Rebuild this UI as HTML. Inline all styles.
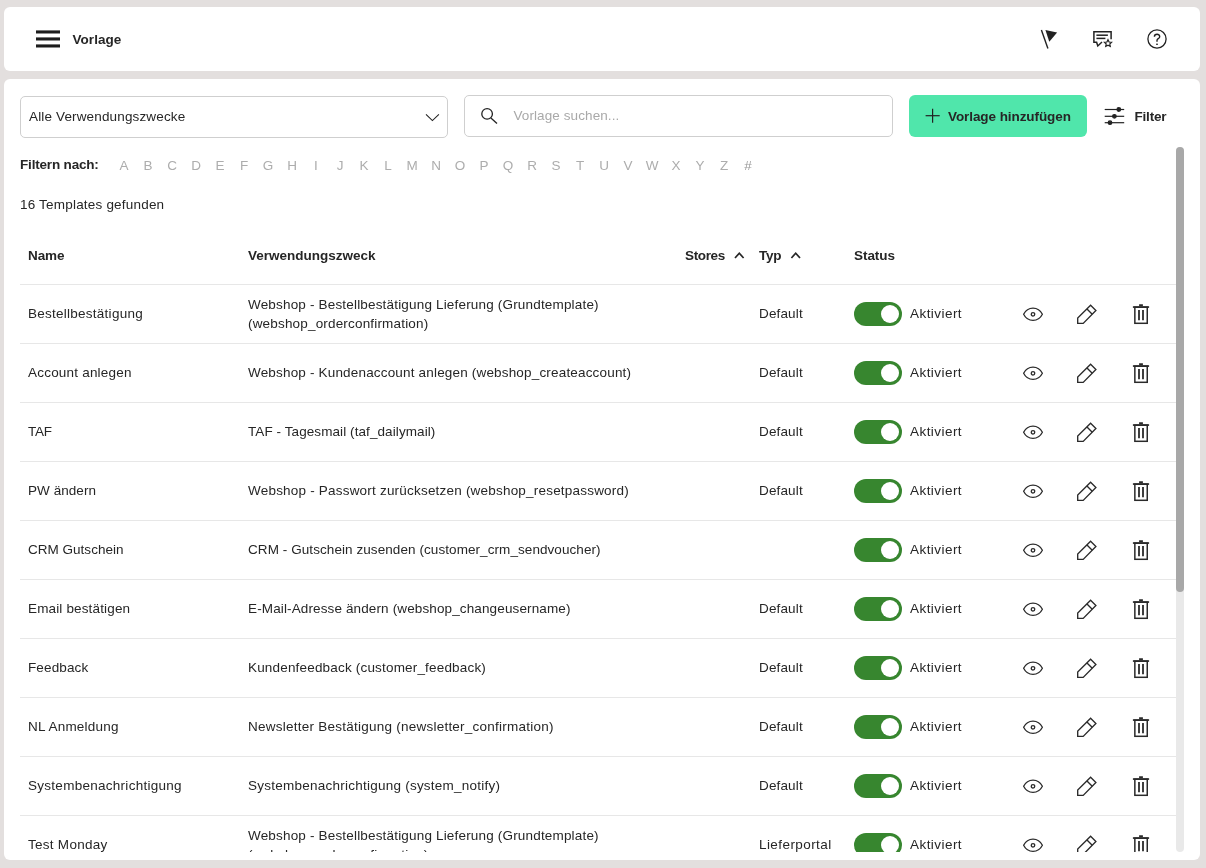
<!DOCTYPE html>
<html lang="de">
<head>
<meta charset="utf-8">
<title>Vorlage</title>
<style>
*{box-sizing:border-box;margin:0;padding:0}
html,body{width:1206px;height:868px;overflow:hidden;background:#e3dfde}
body{font-family:"Liberation Sans",sans-serif;font-size:13.5px;letter-spacing:.15px;color:#262626;position:relative}
#wrap{position:absolute;left:0;top:0;width:1206px;height:868px;will-change:transform}
.panel{position:absolute;background:#fff;border-radius:6px}
#top{left:4px;top:7px;width:1196px;height:64px}
#main{left:4px;top:79px;width:1196px;height:781px}
.abs{position:absolute;white-space:nowrap}
.b{font-weight:700;font-size:13.5px}
svg{position:absolute;overflow:visible}
.ham{position:absolute;left:36px;width:24px;height:3px;background:#262626}
.box{position:absolute;border:1px solid #cfcfcf;border-radius:5px;background:#fff}
.btn{position:absolute;left:909px;top:95px;width:178px;height:42px;border-radius:6px;background:#50e6ab}
.alpha{position:absolute;top:158px;height:16px;line-height:16px;width:24px;text-align:center;color:#adadad;letter-spacing:0}
#scroll{position:absolute;left:20px;top:147px;width:1156px;height:705px;overflow:hidden}
.row{position:absolute;left:0;width:1156px;height:59px;border-top:1px solid #e7e7e7}
.row .t{position:absolute;white-space:nowrap;line-height:19px}
.tg{position:absolute;left:834px;top:17px;width:48px;height:24px;border-radius:12px;background:#37862f}
.tg i{position:absolute;left:27px;top:3px;width:18px;height:18px;border-radius:9px;background:#fff}
.track{position:absolute;left:1176px;top:147px;width:8px;height:705px;border-radius:4px;background:#e9e9e9}
.thumb{position:absolute;left:1176px;top:147px;width:8px;height:445px;border-radius:4px;background:#a8a8a8}
</style>
</head>
<body>
<div id="wrap">
<div class="panel" id="top"></div>
<div class="panel" id="main"></div>

<!-- header -->
<svg style="left:32px;top:24px" width="32" height="30" viewBox="32 24 32 30" stroke="#1c1c1c" stroke-width="3.1">
  <line x1="36" y1="31.95" x2="60" y2="31.95"/>
  <line x1="36" y1="38.95" x2="60" y2="38.95"/>
  <line x1="36" y1="45.95" x2="60" y2="45.95"/>
</svg>
<div class="abs b" style="left:72.5px;top:32px;line-height:16px;letter-spacing:.05px">Vorlage</div>

<svg style="left:1029px;top:19px" width="40" height="40" viewBox="1029 19 40 40">
  <line x1="1041.4" y1="30.1" x2="1047.9" y2="48.4" stroke="#222" stroke-width="1.4"/>
  <polygon points="1045.4,30.1 1057.1,32.5 1049.3,41.8" fill="#222"/>
</svg>
<svg style="left:1083px;top:19px" width="40" height="40" viewBox="1083 19 40 40" fill="none" stroke="#222" stroke-width="1.5">
  <path d="M1111.1 39.3 V31.7 H1093.9 V42.2 H1096.6 L1097.8 46 L1102 42"/>
  <line x1="1096.4" y1="35.2" x2="1107.9" y2="35.2"/>
  <line x1="1096.4" y1="38.4" x2="1105.4" y2="38.4"/>
  <path stroke-width="1.2" d="M1108 39.7 L1109.1 42 L1111.6 42.3 L1109.8 44 L1110.3 46.5 L1108 45.3 L1105.7 46.5 L1106.2 44 L1104.4 42.3 L1106.9 42 Z"/>
</svg>
<svg style="left:1137px;top:19px" width="40" height="40" viewBox="1137 19 40 40" fill="none" stroke="#222" stroke-width="1.3">
  <circle cx="1157" cy="39" r="9.1"/>
  <path stroke-width="1.4" d="M1154.4 36.8 C1154.4 33.4 1159.7 33.4 1159.7 36.7 C1159.7 38.8 1157 38.5 1157 40.4 V41.7"/>
  <rect x="1156.2" y="43.6" width="1.6" height="1.4" fill="#222" stroke="none"/>
</svg>

<!-- toolbar -->
<div class="box" style="left:20px;top:96px;width:428px;height:42px"></div>
<div class="abs" style="left:29px;top:108px;line-height:18px">Alle Verwendungszwecke</div>
<svg style="left:420px;top:106px" width="24" height="24" viewBox="420 106 24 24" fill="none" stroke="#222" stroke-width="1.1">
  <path d="M426 114.4 L432.4 120.6 L438.9 114.4"/>
</svg>
<div class="box" style="left:464px;top:95px;width:429px;height:42px"></div>
<svg style="left:476px;top:104px" width="24" height="24" viewBox="476 104 24 24" fill="none" stroke="#222" stroke-width="1.3">
  <circle cx="487.1" cy="113.9" r="5.3"/>
  <line x1="490.9" y1="117.9" x2="497" y2="123.4"/>
</svg>
<div class="abs" style="left:513.5px;top:107px;line-height:18px;color:#a9a9a9;letter-spacing:.09px">Vorlage suchen...</div>
<div class="btn"></div>
<svg style="left:924px;top:107px" width="18" height="18" viewBox="924 107 18 18" stroke="#222" stroke-width="1.2">
  <line x1="925.6" y1="115.7" x2="939.7" y2="115.7"/>
  <line x1="932.6" y1="108.7" x2="932.6" y2="122.7"/>
</svg>
<div class="abs b" style="left:948px;top:108px;line-height:18px;letter-spacing:-.08px">Vorlage hinzufügen</div>
<svg style="left:1094px;top:96px" width="40" height="40" viewBox="1094 96 40 40" stroke="#222" stroke-width="1.2" fill="#222">
  <line x1="1104.7" y1="109.5" x2="1124.2" y2="109.5"/>
  <line x1="1104.7" y1="116.3" x2="1124.2" y2="116.3"/>
  <line x1="1104.7" y1="122.7" x2="1124.2" y2="122.7"/>
  <circle cx="1118.8" cy="109.5" r="1.8"/>
  <circle cx="1114.4" cy="116.3" r="1.8"/>
  <circle cx="1110" cy="122.7" r="1.8"/>
</svg>
<div class="abs b" style="left:1134.5px;top:108px;line-height:18px;letter-spacing:-.2px">Filter</div>

<!-- alphabet filter -->
<div class="abs b" style="left:20px;top:156px;line-height:18px;letter-spacing:-.18px">Filtern nach:</div>
<div id="alpha"><div class="alpha" style="left:112px">A</div><div class="alpha" style="left:136px">B</div><div class="alpha" style="left:160px">C</div><div class="alpha" style="left:184px">D</div><div class="alpha" style="left:208px">E</div><div class="alpha" style="left:232px">F</div><div class="alpha" style="left:256px">G</div><div class="alpha" style="left:280px">H</div><div class="alpha" style="left:304px">I</div><div class="alpha" style="left:328px">J</div><div class="alpha" style="left:352px">K</div><div class="alpha" style="left:376px">L</div><div class="alpha" style="left:400px">M</div><div class="alpha" style="left:424px">N</div><div class="alpha" style="left:448px">O</div><div class="alpha" style="left:472px">P</div><div class="alpha" style="left:496px">Q</div><div class="alpha" style="left:520px">R</div><div class="alpha" style="left:544px">S</div><div class="alpha" style="left:568px">T</div><div class="alpha" style="left:592px">U</div><div class="alpha" style="left:616px">V</div><div class="alpha" style="left:640px">W</div><div class="alpha" style="left:664px">X</div><div class="alpha" style="left:688px">Y</div><div class="alpha" style="left:712px">Z</div><div class="alpha" style="left:736px;color:#9a9a9a">#</div></div>
<div class="abs" style="left:20px;top:196px;line-height:18px;letter-spacing:.2px">16 Templates gefunden</div>

<!-- table -->
<div id="scroll">
  <div id="rows"><div class="abs b" style="left:8px;top:100px;line-height:18px;letter-spacing:-0.1px">Name</div>
<div class="abs b" style="left:228px;top:100px;line-height:18px;letter-spacing:0px">Verwendungszweck</div>
<div class="abs b" style="left:665px;top:100px;line-height:18px;letter-spacing:-0.37px">Stores</div>
<svg style="left:712px;top:100px" width="16" height="16" viewBox="732 247 16 16" fill="none" stroke="#262626" stroke-width="1.7"><path d="M735 258 L739.3 253.2 L743.6 258"/></svg>
<div class="abs b" style="left:739px;top:100px;line-height:18px;letter-spacing:-0.2px">Typ</div>
<svg style="left:768px;top:100px" width="16" height="16" viewBox="788 247 16 16" fill="none" stroke="#262626" stroke-width="1.7"><path d="M791.4 258 L795.7 253.2 L800 258"/></svg>
<div class="abs b" style="left:834px;top:100px;line-height:18px;letter-spacing:-0.05px">Status</div>
<div class="row" style="top:137px">
<div class="t" style="left:8px;top:19px;letter-spacing:0.256px">Bestellbestätigung</div>
<div class="t" style="left:228px;top:10px;letter-spacing:0.177px">Webshop - Bestellbestätigung Lieferung (Grundtemplate)<br>(webshop_orderconfirmation)</div>
<div class="t" style="left:739px;top:19px;letter-spacing:0.15px">Default</div>
<div class="tg"><i></i></div>
<div class="t" style="left:890px;top:19px;letter-spacing:0.451px">Aktiviert</div>
<svg style="left:1001px;top:17px" width="24" height="24" viewBox="-12 -12 24 24" fill="none" stroke="#2a2a2a" stroke-width="1.3"><path stroke-linejoin="round" d="M-9.4 0.2 C-5.2 -8 5.2 -8 9.4 0.2 C5.2 8.4 -5.2 8.4 -9.4 0.2 Z"/><circle cx="0" cy="0.3" r="1.75"/></svg>
<svg style="left:1055px;top:17px" width="24" height="24" viewBox="1075 302 24 24" fill="none" stroke="#2a2a2a" stroke-width="1.35" stroke-linejoin="miter"><path d="M1090.6 305.3 L1095.9 310.6 L1083.2 323.4 H1077.7 V318.1 Z"/><line x1="1087" y1="309" x2="1092.2" y2="314.2"/></svg>
<svg style="left:1109px;top:17px" width="24" height="24" viewBox="1129 302 24 24" fill="none" stroke="#2a2a2a" stroke-width="1.5"><rect x="1134.85" y="307.2" width="12.4" height="16.1"/><line x1="1132.9" y1="307.05" x2="1149.1" y2="307.05" stroke-width="1.7"/><line x1="1139.1" y1="305.2" x2="1142.9" y2="305.2" stroke-width="1.9"/><line x1="1139" y1="310" x2="1139" y2="320.2" stroke-width="1.8"/><line x1="1143" y1="310" x2="1143" y2="320.2" stroke-width="1.8"/></svg>
</div>
<div class="row" style="top:196px">
<div class="t" style="left:8px;top:19px;letter-spacing:0.207px">Account anlegen</div>
<div class="t" style="left:228px;top:19px;letter-spacing:0.176px">Webshop - Kundenaccount anlegen (webshop_createaccount)</div>
<div class="t" style="left:739px;top:19px;letter-spacing:0.15px">Default</div>
<div class="tg"><i></i></div>
<div class="t" style="left:890px;top:19px;letter-spacing:0.451px">Aktiviert</div>
<svg style="left:1001px;top:17px" width="24" height="24" viewBox="-12 -12 24 24" fill="none" stroke="#2a2a2a" stroke-width="1.3"><path stroke-linejoin="round" d="M-9.4 0.2 C-5.2 -8 5.2 -8 9.4 0.2 C5.2 8.4 -5.2 8.4 -9.4 0.2 Z"/><circle cx="0" cy="0.3" r="1.75"/></svg>
<svg style="left:1055px;top:17px" width="24" height="24" viewBox="1075 302 24 24" fill="none" stroke="#2a2a2a" stroke-width="1.35" stroke-linejoin="miter"><path d="M1090.6 305.3 L1095.9 310.6 L1083.2 323.4 H1077.7 V318.1 Z"/><line x1="1087" y1="309" x2="1092.2" y2="314.2"/></svg>
<svg style="left:1109px;top:17px" width="24" height="24" viewBox="1129 302 24 24" fill="none" stroke="#2a2a2a" stroke-width="1.5"><rect x="1134.85" y="307.2" width="12.4" height="16.1"/><line x1="1132.9" y1="307.05" x2="1149.1" y2="307.05" stroke-width="1.7"/><line x1="1139.1" y1="305.2" x2="1142.9" y2="305.2" stroke-width="1.9"/><line x1="1139" y1="310" x2="1139" y2="320.2" stroke-width="1.8"/><line x1="1143" y1="310" x2="1143" y2="320.2" stroke-width="1.8"/></svg>
</div>
<div class="row" style="top:255px">
<div class="t" style="left:8px;top:19px;letter-spacing:-0.25px">TAF</div>
<div class="t" style="left:228px;top:19px;letter-spacing:0.083px">TAF - Tagesmail (taf_dailymail)</div>
<div class="t" style="left:739px;top:19px;letter-spacing:0.15px">Default</div>
<div class="tg"><i></i></div>
<div class="t" style="left:890px;top:19px;letter-spacing:0.451px">Aktiviert</div>
<svg style="left:1001px;top:17px" width="24" height="24" viewBox="-12 -12 24 24" fill="none" stroke="#2a2a2a" stroke-width="1.3"><path stroke-linejoin="round" d="M-9.4 0.2 C-5.2 -8 5.2 -8 9.4 0.2 C5.2 8.4 -5.2 8.4 -9.4 0.2 Z"/><circle cx="0" cy="0.3" r="1.75"/></svg>
<svg style="left:1055px;top:17px" width="24" height="24" viewBox="1075 302 24 24" fill="none" stroke="#2a2a2a" stroke-width="1.35" stroke-linejoin="miter"><path d="M1090.6 305.3 L1095.9 310.6 L1083.2 323.4 H1077.7 V318.1 Z"/><line x1="1087" y1="309" x2="1092.2" y2="314.2"/></svg>
<svg style="left:1109px;top:17px" width="24" height="24" viewBox="1129 302 24 24" fill="none" stroke="#2a2a2a" stroke-width="1.5"><rect x="1134.85" y="307.2" width="12.4" height="16.1"/><line x1="1132.9" y1="307.05" x2="1149.1" y2="307.05" stroke-width="1.7"/><line x1="1139.1" y1="305.2" x2="1142.9" y2="305.2" stroke-width="1.9"/><line x1="1139" y1="310" x2="1139" y2="320.2" stroke-width="1.8"/><line x1="1143" y1="310" x2="1143" y2="320.2" stroke-width="1.8"/></svg>
</div>
<div class="row" style="top:314px">
<div class="t" style="left:8px;top:19px;letter-spacing:0.05px">PW ändern</div>
<div class="t" style="left:228px;top:19px;letter-spacing:0.205px">Webshop - Passwort zurücksetzen (webshop_resetpassword)</div>
<div class="t" style="left:739px;top:19px;letter-spacing:0.15px">Default</div>
<div class="tg"><i></i></div>
<div class="t" style="left:890px;top:19px;letter-spacing:0.451px">Aktiviert</div>
<svg style="left:1001px;top:17px" width="24" height="24" viewBox="-12 -12 24 24" fill="none" stroke="#2a2a2a" stroke-width="1.3"><path stroke-linejoin="round" d="M-9.4 0.2 C-5.2 -8 5.2 -8 9.4 0.2 C5.2 8.4 -5.2 8.4 -9.4 0.2 Z"/><circle cx="0" cy="0.3" r="1.75"/></svg>
<svg style="left:1055px;top:17px" width="24" height="24" viewBox="1075 302 24 24" fill="none" stroke="#2a2a2a" stroke-width="1.35" stroke-linejoin="miter"><path d="M1090.6 305.3 L1095.9 310.6 L1083.2 323.4 H1077.7 V318.1 Z"/><line x1="1087" y1="309" x2="1092.2" y2="314.2"/></svg>
<svg style="left:1109px;top:17px" width="24" height="24" viewBox="1129 302 24 24" fill="none" stroke="#2a2a2a" stroke-width="1.5"><rect x="1134.85" y="307.2" width="12.4" height="16.1"/><line x1="1132.9" y1="307.05" x2="1149.1" y2="307.05" stroke-width="1.7"/><line x1="1139.1" y1="305.2" x2="1142.9" y2="305.2" stroke-width="1.9"/><line x1="1139" y1="310" x2="1139" y2="320.2" stroke-width="1.8"/><line x1="1143" y1="310" x2="1143" y2="320.2" stroke-width="1.8"/></svg>
</div>
<div class="row" style="top:373px">
<div class="t" style="left:8px;top:19px;letter-spacing:0.017px">CRM Gutschein</div>
<div class="t" style="left:228px;top:19px;letter-spacing:0.074px">CRM - Gutschein zusenden (customer_crm_sendvoucher)</div>
<div class="t" style="left:739px;top:19px;letter-spacing:0.15px"></div>
<div class="tg"><i></i></div>
<div class="t" style="left:890px;top:19px;letter-spacing:0.451px">Aktiviert</div>
<svg style="left:1001px;top:17px" width="24" height="24" viewBox="-12 -12 24 24" fill="none" stroke="#2a2a2a" stroke-width="1.3"><path stroke-linejoin="round" d="M-9.4 0.2 C-5.2 -8 5.2 -8 9.4 0.2 C5.2 8.4 -5.2 8.4 -9.4 0.2 Z"/><circle cx="0" cy="0.3" r="1.75"/></svg>
<svg style="left:1055px;top:17px" width="24" height="24" viewBox="1075 302 24 24" fill="none" stroke="#2a2a2a" stroke-width="1.35" stroke-linejoin="miter"><path d="M1090.6 305.3 L1095.9 310.6 L1083.2 323.4 H1077.7 V318.1 Z"/><line x1="1087" y1="309" x2="1092.2" y2="314.2"/></svg>
<svg style="left:1109px;top:17px" width="24" height="24" viewBox="1129 302 24 24" fill="none" stroke="#2a2a2a" stroke-width="1.5"><rect x="1134.85" y="307.2" width="12.4" height="16.1"/><line x1="1132.9" y1="307.05" x2="1149.1" y2="307.05" stroke-width="1.7"/><line x1="1139.1" y1="305.2" x2="1142.9" y2="305.2" stroke-width="1.9"/><line x1="1139" y1="310" x2="1139" y2="320.2" stroke-width="1.8"/><line x1="1143" y1="310" x2="1143" y2="320.2" stroke-width="1.8"/></svg>
</div>
<div class="row" style="top:432px">
<div class="t" style="left:8px;top:19px;letter-spacing:0.15px">Email bestätigen</div>
<div class="t" style="left:228px;top:19px;letter-spacing:0.128px">E-Mail-Adresse ändern (webshop_changeusername)</div>
<div class="t" style="left:739px;top:19px;letter-spacing:0.15px">Default</div>
<div class="tg"><i></i></div>
<div class="t" style="left:890px;top:19px;letter-spacing:0.451px">Aktiviert</div>
<svg style="left:1001px;top:17px" width="24" height="24" viewBox="-12 -12 24 24" fill="none" stroke="#2a2a2a" stroke-width="1.3"><path stroke-linejoin="round" d="M-9.4 0.2 C-5.2 -8 5.2 -8 9.4 0.2 C5.2 8.4 -5.2 8.4 -9.4 0.2 Z"/><circle cx="0" cy="0.3" r="1.75"/></svg>
<svg style="left:1055px;top:17px" width="24" height="24" viewBox="1075 302 24 24" fill="none" stroke="#2a2a2a" stroke-width="1.35" stroke-linejoin="miter"><path d="M1090.6 305.3 L1095.9 310.6 L1083.2 323.4 H1077.7 V318.1 Z"/><line x1="1087" y1="309" x2="1092.2" y2="314.2"/></svg>
<svg style="left:1109px;top:17px" width="24" height="24" viewBox="1129 302 24 24" fill="none" stroke="#2a2a2a" stroke-width="1.5"><rect x="1134.85" y="307.2" width="12.4" height="16.1"/><line x1="1132.9" y1="307.05" x2="1149.1" y2="307.05" stroke-width="1.7"/><line x1="1139.1" y1="305.2" x2="1142.9" y2="305.2" stroke-width="1.9"/><line x1="1139" y1="310" x2="1139" y2="320.2" stroke-width="1.8"/><line x1="1143" y1="310" x2="1143" y2="320.2" stroke-width="1.8"/></svg>
</div>
<div class="row" style="top:491px">
<div class="t" style="left:8px;top:19px;letter-spacing:0.121px">Feedback</div>
<div class="t" style="left:228px;top:19px;letter-spacing:0.18px">Kundenfeedback (customer_feedback)</div>
<div class="t" style="left:739px;top:19px;letter-spacing:0.15px">Default</div>
<div class="tg"><i></i></div>
<div class="t" style="left:890px;top:19px;letter-spacing:0.451px">Aktiviert</div>
<svg style="left:1001px;top:17px" width="24" height="24" viewBox="-12 -12 24 24" fill="none" stroke="#2a2a2a" stroke-width="1.3"><path stroke-linejoin="round" d="M-9.4 0.2 C-5.2 -8 5.2 -8 9.4 0.2 C5.2 8.4 -5.2 8.4 -9.4 0.2 Z"/><circle cx="0" cy="0.3" r="1.75"/></svg>
<svg style="left:1055px;top:17px" width="24" height="24" viewBox="1075 302 24 24" fill="none" stroke="#2a2a2a" stroke-width="1.35" stroke-linejoin="miter"><path d="M1090.6 305.3 L1095.9 310.6 L1083.2 323.4 H1077.7 V318.1 Z"/><line x1="1087" y1="309" x2="1092.2" y2="314.2"/></svg>
<svg style="left:1109px;top:17px" width="24" height="24" viewBox="1129 302 24 24" fill="none" stroke="#2a2a2a" stroke-width="1.5"><rect x="1134.85" y="307.2" width="12.4" height="16.1"/><line x1="1132.9" y1="307.05" x2="1149.1" y2="307.05" stroke-width="1.7"/><line x1="1139.1" y1="305.2" x2="1142.9" y2="305.2" stroke-width="1.9"/><line x1="1139" y1="310" x2="1139" y2="320.2" stroke-width="1.8"/><line x1="1143" y1="310" x2="1143" y2="320.2" stroke-width="1.8"/></svg>
</div>
<div class="row" style="top:550px">
<div class="t" style="left:8px;top:19px;letter-spacing:0.222px">NL Anmeldung</div>
<div class="t" style="left:228px;top:19px;letter-spacing:0.243px">Newsletter Bestätigung (newsletter_confirmation)</div>
<div class="t" style="left:739px;top:19px;letter-spacing:0.15px">Default</div>
<div class="tg"><i></i></div>
<div class="t" style="left:890px;top:19px;letter-spacing:0.451px">Aktiviert</div>
<svg style="left:1001px;top:17px" width="24" height="24" viewBox="-12 -12 24 24" fill="none" stroke="#2a2a2a" stroke-width="1.3"><path stroke-linejoin="round" d="M-9.4 0.2 C-5.2 -8 5.2 -8 9.4 0.2 C5.2 8.4 -5.2 8.4 -9.4 0.2 Z"/><circle cx="0" cy="0.3" r="1.75"/></svg>
<svg style="left:1055px;top:17px" width="24" height="24" viewBox="1075 302 24 24" fill="none" stroke="#2a2a2a" stroke-width="1.35" stroke-linejoin="miter"><path d="M1090.6 305.3 L1095.9 310.6 L1083.2 323.4 H1077.7 V318.1 Z"/><line x1="1087" y1="309" x2="1092.2" y2="314.2"/></svg>
<svg style="left:1109px;top:17px" width="24" height="24" viewBox="1129 302 24 24" fill="none" stroke="#2a2a2a" stroke-width="1.5"><rect x="1134.85" y="307.2" width="12.4" height="16.1"/><line x1="1132.9" y1="307.05" x2="1149.1" y2="307.05" stroke-width="1.7"/><line x1="1139.1" y1="305.2" x2="1142.9" y2="305.2" stroke-width="1.9"/><line x1="1139" y1="310" x2="1139" y2="320.2" stroke-width="1.8"/><line x1="1143" y1="310" x2="1143" y2="320.2" stroke-width="1.8"/></svg>
</div>
<div class="row" style="top:609px">
<div class="t" style="left:8px;top:19px;letter-spacing:0.274px">Systembenachrichtigung</div>
<div class="t" style="left:228px;top:19px;letter-spacing:0.242px">Systembenachrichtigung (system_notify)</div>
<div class="t" style="left:739px;top:19px;letter-spacing:0.15px">Default</div>
<div class="tg"><i></i></div>
<div class="t" style="left:890px;top:19px;letter-spacing:0.451px">Aktiviert</div>
<svg style="left:1001px;top:17px" width="24" height="24" viewBox="-12 -12 24 24" fill="none" stroke="#2a2a2a" stroke-width="1.3"><path stroke-linejoin="round" d="M-9.4 0.2 C-5.2 -8 5.2 -8 9.4 0.2 C5.2 8.4 -5.2 8.4 -9.4 0.2 Z"/><circle cx="0" cy="0.3" r="1.75"/></svg>
<svg style="left:1055px;top:17px" width="24" height="24" viewBox="1075 302 24 24" fill="none" stroke="#2a2a2a" stroke-width="1.35" stroke-linejoin="miter"><path d="M1090.6 305.3 L1095.9 310.6 L1083.2 323.4 H1077.7 V318.1 Z"/><line x1="1087" y1="309" x2="1092.2" y2="314.2"/></svg>
<svg style="left:1109px;top:17px" width="24" height="24" viewBox="1129 302 24 24" fill="none" stroke="#2a2a2a" stroke-width="1.5"><rect x="1134.85" y="307.2" width="12.4" height="16.1"/><line x1="1132.9" y1="307.05" x2="1149.1" y2="307.05" stroke-width="1.7"/><line x1="1139.1" y1="305.2" x2="1142.9" y2="305.2" stroke-width="1.9"/><line x1="1139" y1="310" x2="1139" y2="320.2" stroke-width="1.8"/><line x1="1143" y1="310" x2="1143" y2="320.2" stroke-width="1.8"/></svg>
</div>
<div class="row" style="top:668px">
<div class="t" style="left:8px;top:19px;letter-spacing:0.27px">Test Monday</div>
<div class="t" style="left:228px;top:10px;letter-spacing:0.177px">Webshop - Bestellbestätigung Lieferung (Grundtemplate)<br>(webshop_orderconfirmation)</div>
<div class="t" style="left:739px;top:19px;letter-spacing:0.423px">Lieferportal</div>
<div class="tg"><i></i></div>
<div class="t" style="left:890px;top:19px;letter-spacing:0.451px">Aktiviert</div>
<svg style="left:1001px;top:17px" width="24" height="24" viewBox="-12 -12 24 24" fill="none" stroke="#2a2a2a" stroke-width="1.3"><path stroke-linejoin="round" d="M-9.4 0.2 C-5.2 -8 5.2 -8 9.4 0.2 C5.2 8.4 -5.2 8.4 -9.4 0.2 Z"/><circle cx="0" cy="0.3" r="1.75"/></svg>
<svg style="left:1055px;top:17px" width="24" height="24" viewBox="1075 302 24 24" fill="none" stroke="#2a2a2a" stroke-width="1.35" stroke-linejoin="miter"><path d="M1090.6 305.3 L1095.9 310.6 L1083.2 323.4 H1077.7 V318.1 Z"/><line x1="1087" y1="309" x2="1092.2" y2="314.2"/></svg>
<svg style="left:1109px;top:17px" width="24" height="24" viewBox="1129 302 24 24" fill="none" stroke="#2a2a2a" stroke-width="1.5"><rect x="1134.85" y="307.2" width="12.4" height="16.1"/><line x1="1132.9" y1="307.05" x2="1149.1" y2="307.05" stroke-width="1.7"/><line x1="1139.1" y1="305.2" x2="1142.9" y2="305.2" stroke-width="1.9"/><line x1="1139" y1="310" x2="1139" y2="320.2" stroke-width="1.8"/><line x1="1143" y1="310" x2="1143" y2="320.2" stroke-width="1.8"/></svg>
</div></div>
</div>
<div class="track"></div>
<div class="thumb"></div>
</div>
</body>
</html>
